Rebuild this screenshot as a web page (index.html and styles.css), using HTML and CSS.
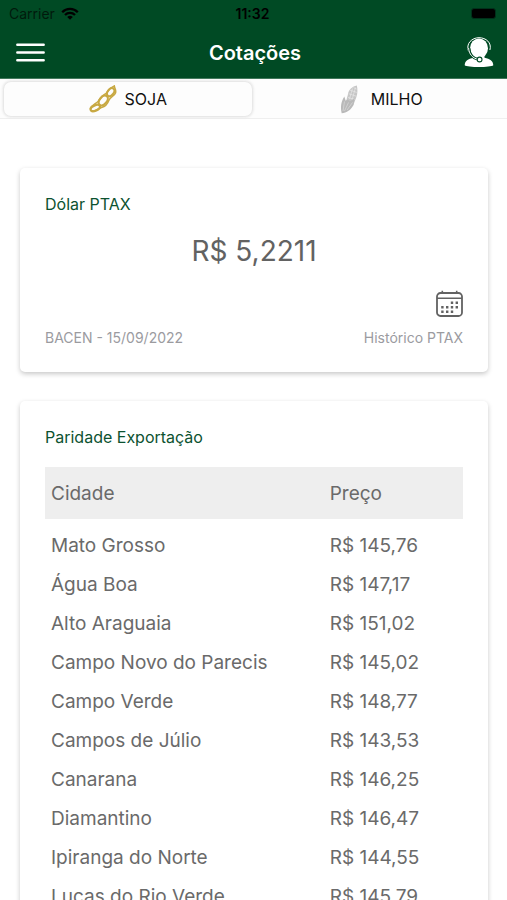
FILE: index.html
```html
<!DOCTYPE html>
<html lang="pt-BR">
<head>
<meta charset="utf-8">
<meta name="viewport" content="width=device-width, initial-scale=1">
<title>Cotações</title>
<link rel="stylesheet" href="styles.css">
</head>
<body>
<header class="header">
  <div class="status">
    <div class="carrier">
      <span>Carrier</span>
      <svg class="wifi" viewBox="0 0 18 13" aria-hidden="true">
        <path d="M1.2 5.2a11 11 0 0 1 15.6 0M4 8a7.1 7.1 0 0 1 10 0" fill="none" stroke="currentColor" stroke-width="2.3"/>
        <path d="M9 12.8 6.2 10a4 4 0 0 1 5.6 0z" fill="currentColor"/>
      </svg>
    </div>
    <time class="clock">11:32</time>
    <div class="battery-slot"><span class="battery"></span></div>
  </div>
  <div class="navbar">
    <button class="icon-button" type="button" aria-label="Menu">
      <svg class="menu-icon" viewBox="0 0 29 19" aria-hidden="true">
        <path d="M1.3 1.7h26.4M1.3 9.5h26.4M1.3 17.3h26.4" stroke="#fff" stroke-width="2.4" stroke-linecap="round"/>
      </svg>
    </button>
    <h1 class="title">Cotações</h1>
    <button class="icon-button icon-button-end" type="button" aria-label="Atendimento">
      <svg class="support-icon" viewBox="0 0 30 31" aria-hidden="true">
        <path d="M.7 28.200C.9 24 4 21.800 9.500 20.800V17h11v3.800c5.500 1 8.600 3.200 8.800 7.400-2.500 2.400-26.100 2.400-28.600 0z" fill="#fff"/>
        <ellipse cx="15" cy="11.300" rx="9" ry="9.800" fill="#fff"/>
        <path d="M4.600 14.500C1.500 6.500 8 .7 15 .7s13 5 10.900 12.300" fill="none" stroke="#fff" stroke-width="1"/>
        <path d="M5 11c.3 6 3.900 10.300 9.100 11.300" fill="none" stroke="#004a24" stroke-width="2.800"/>
        <path d="M4.600 11c.3 6 4.100 10.400 9.500 11.300" fill="none" stroke="#fff" stroke-width="1"/>
        <circle cx="15.600" cy="22.500" r="2.400" fill="#fff" stroke="#004a24" stroke-width="1.100"/>
      </svg>
    </button>
  </div>
</header>

<nav class="tabs" aria-label="Produto">
  <button class="tab tab-active" type="button" aria-pressed="true">
    <svg class="soy-icon" viewBox="0 0 28 28" aria-hidden="true">
      <g fill="none" stroke="#c8a943" stroke-width="2.200">
        <ellipse cx="6.300" cy="23" rx="5" ry="2.600" transform="rotate(-24 6.300 23)"/>
        <ellipse cx="14.300" cy="15.500" rx="5.600" ry="3.600" transform="rotate(-50 14.300 15.500)"/>
        <ellipse cx="21.700" cy="7.200" rx="4.600" ry="3" transform="rotate(-52 21.700 7.200)"/>
        <path d="M1.300 24C2.500 20 6.500 19 9 16.500S11.500 11.500 15.500 9.500 18.500 3.800 25.300.9C25.700 4 27.500 5 26.500 8S21 12 19.800 15.500 16 21.500 12.500 22.500 6.500 27.500 2 25.500" stroke-width="1.500"/>
      </g>
    </svg>
    <span>SOJA</span>
  </button>
  <button class="tab" type="button" aria-pressed="false">
    <svg class="corn-icon" viewBox="0 0 18 29" aria-hidden="true">
      <path d="M16.800.5c-4.300.8-8.300 4-9 9.500L5 20l8 1 3.400-9C17.700 8.500 17.700 4 16.800.5z" fill="#c6c6c6"/>
      <path d="M10 5.200l6.800 2.200M8.600 8.700l7.600 2.500M8 12.500l7 2M13.500 2.600l3 1.400M12.500 3.500 9.500 14M15.500 2.500 12 15" stroke="#e6e6e6" stroke-width=".7"/>
      <path d="M4.300 11.500C1 16.500.3 22.500 1.700 28.300c5-.4 9.400-3.300 11.700-8.300l1.300-6.700-4.700 3-2.300-1.800-2 1.200z" fill="#b9b9b9"/>
      <path d="M4.500 16.500 3 26M8.500 17.500 4.500 26M12.500 17.500 7 25" stroke="#d6d6d6" stroke-width=".8"/>
    </svg>
    <span>MILHO</span>
  </button>
</nav>

<main class="content">
  <section class="card">
    <h2 class="card-title">Dólar PTAX</h2>
    <p class="rate">R$ 5,2211</p>
    <div class="card-footer">
      <span>BACEN - 15/09/2022</span>
      <a class="history" href="#historico">
        <svg class="calendar-icon" viewBox="0 0 27 27" aria-hidden="true">
          <rect x="1" y="3" width="25" height="23" rx="3.500" fill="none" stroke="#626262" stroke-width="1.800"/>
          <path d="M1 8.300h25M6.300 3V.8M20.700 3V.8" fill="none" stroke="#626262" stroke-width="1.600"/>
          <path d="M14.800 12.800h2.400m2.400 0H22M5.200 17.300h2.400m2.400 0h2.400m2.400 0h2.400m2.400 0H22M5.200 21.800h2.400m2.400 0h2.400m2.400 0h2.400" stroke="#626262" stroke-width="2.400"/>
        </svg>
        <span>Histórico PTAX</span>
      </a>
    </div>
  </section>

  <section class="card">
    <h2 class="card-title" id="paridade">Paridade Exportação</h2>
    <table class="prices" aria-labelledby="paridade">
      <thead>
        <tr><th scope="col">Cidade</th><th class="price" scope="col">Preço</th></tr>
      </thead>
      <tbody>
        <tr><td>Mato Grosso</td><td>R$ 145,76</td></tr>
        <tr><td>Água Boa</td><td>R$ 147,17</td></tr>
        <tr><td>Alto Araguaia</td><td>R$ 151,02</td></tr>
        <tr><td>Campo Novo do Parecis</td><td>R$ 145,02</td></tr>
        <tr><td>Campo Verde</td><td>R$ 148,77</td></tr>
        <tr><td>Campos de Júlio</td><td>R$ 143,53</td></tr>
        <tr><td>Canarana</td><td>R$ 146,25</td></tr>
        <tr><td>Diamantino</td><td>R$ 146,47</td></tr>
        <tr><td>Ipiranga do Norte</td><td>R$ 144,55</td></tr>
        <tr><td>Lucas do Rio Verde</td><td>R$ 145,79</td></tr>
      </tbody>
    </table>
  </section>
</main>
</body>
</html>
```
FILE: styles.css
```css
* {
  box-sizing: border-box;
}

body {
  margin: 0;
  height: 100vh;
  display: flex;
  flex-direction: column;
  background: #fff;
  color: #6a6a6a;
  font-family: Inter, "Liberation Sans", sans-serif;
}

h1, h2, p {
  margin: 0;
  font-weight: 400;
}

button {
  border: 0;
  background: none;
  padding: 0;
  color: inherit;
  font: inherit;
}

svg {
  display: block;
}

.header {
  flex: none;
  background: #004a24;
  border-bottom: 1px solid #3f775a;
  color: #fff;
}

.status {
  display: grid;
  grid-template-columns: 1fr auto 1fr;
  align-items: center;
  height: 27px;
  padding: 0 11px 0 9px;
  color: #001a0c;
  font-size: 14px;
}

.carrier {
  display: flex;
  align-items: center;
  gap: 6px;
}

.wifi {
  width: 18px;
  height: 13px;
  color: #000;
}

.clock {
  color: #000;
  font-weight: 600;
}

.battery-slot {
  display: flex;
  justify-content: flex-end;
}

.battery {
  width: 25px;
  height: 11px;
  border: 1px solid #00311a;
  border-radius: 3px;
  background: #000;
}

.navbar {
  display: grid;
  grid-template-columns: 1fr auto 1fr;
  align-items: center;
  height: 51px;
  padding: 0 13px 0 16px;
}

.icon-button {
  justify-self: start;
}

.icon-button-end {
  justify-self: end;
}

.menu-icon {
  width: 29px;
  height: 19px;
}

.support-icon {
  width: 30px;
  height: 31px;
}

.title {
  font-size: 20px;
  line-height: 24px;
  font-weight: 600;
}

.tabs {
  flex: none;
  display: grid;
  grid-template-columns: 1fr 1fr;
  height: 40px;
  border-bottom: 1px solid #efefef;
  background: #fdfdfd;
}

.tab {
  display: flex;
  align-items: center;
  justify-content: center;
  gap: 8px;
  margin: 3px 2px 2px 4px;
  border-radius: 7px;
  color: #111;
  font-size: 16px;
}

.tab-active {
  box-shadow: 0 0 3px 1px #dedede;
}

.soy-icon {
  width: 28px;
  height: 28px;
}

.corn-icon {
  width: 18px;
  height: 29px;
  margin-right: 5px;
}

.content {
  flex: 1;
  min-height: 0;
  overflow-y: auto;
  scrollbar-width: none;
  display: flex;
  flex-direction: column;
  gap: 29px;
  padding: 49px 19px 30px 20px;
}

.card {
  flex: none;
  padding: 24px 25px;
  border-radius: 5px;
  background: #fff;
  box-shadow: 0 2px 5px rgba(0, 0, 0, 0.22);
}

.card-title {
  color: #0c5230;
  font-size: 16px;
  line-height: 25px;
}

.rate {
  margin-top: 16px;
  color: #626262;
  font-size: 28px;
  line-height: 36px;
  text-align: center;
}

.card-footer {
  display: flex;
  justify-content: space-between;
  align-items: flex-end;
  margin-top: 21px;
  color: #9b9b9f;
  font-size: 14px;
  line-height: 20px;
}

.history {
  display: flex;
  flex-direction: column;
  align-items: flex-end;
  gap: 11px;
  color: inherit;
  text-decoration: none;
}

.calendar-icon {
  width: 27px;
  height: 27px;
}

.prices {
  width: 100%;
  margin-top: 17px;
  border-collapse: collapse;
  table-layout: fixed;
  font-size: 19px;
  line-height: 23px;
}

.prices th {
  padding: 15px 6px 14px;
  background: #eee;
  font-weight: 400;
  text-align: left;
}

.prices .price {
  width: 33.33%;
}

.prices tbody::before {
  content: "";
  display: table-row;
  height: 7px;
}

.prices td {
  padding: 8px 6px;
}
```
